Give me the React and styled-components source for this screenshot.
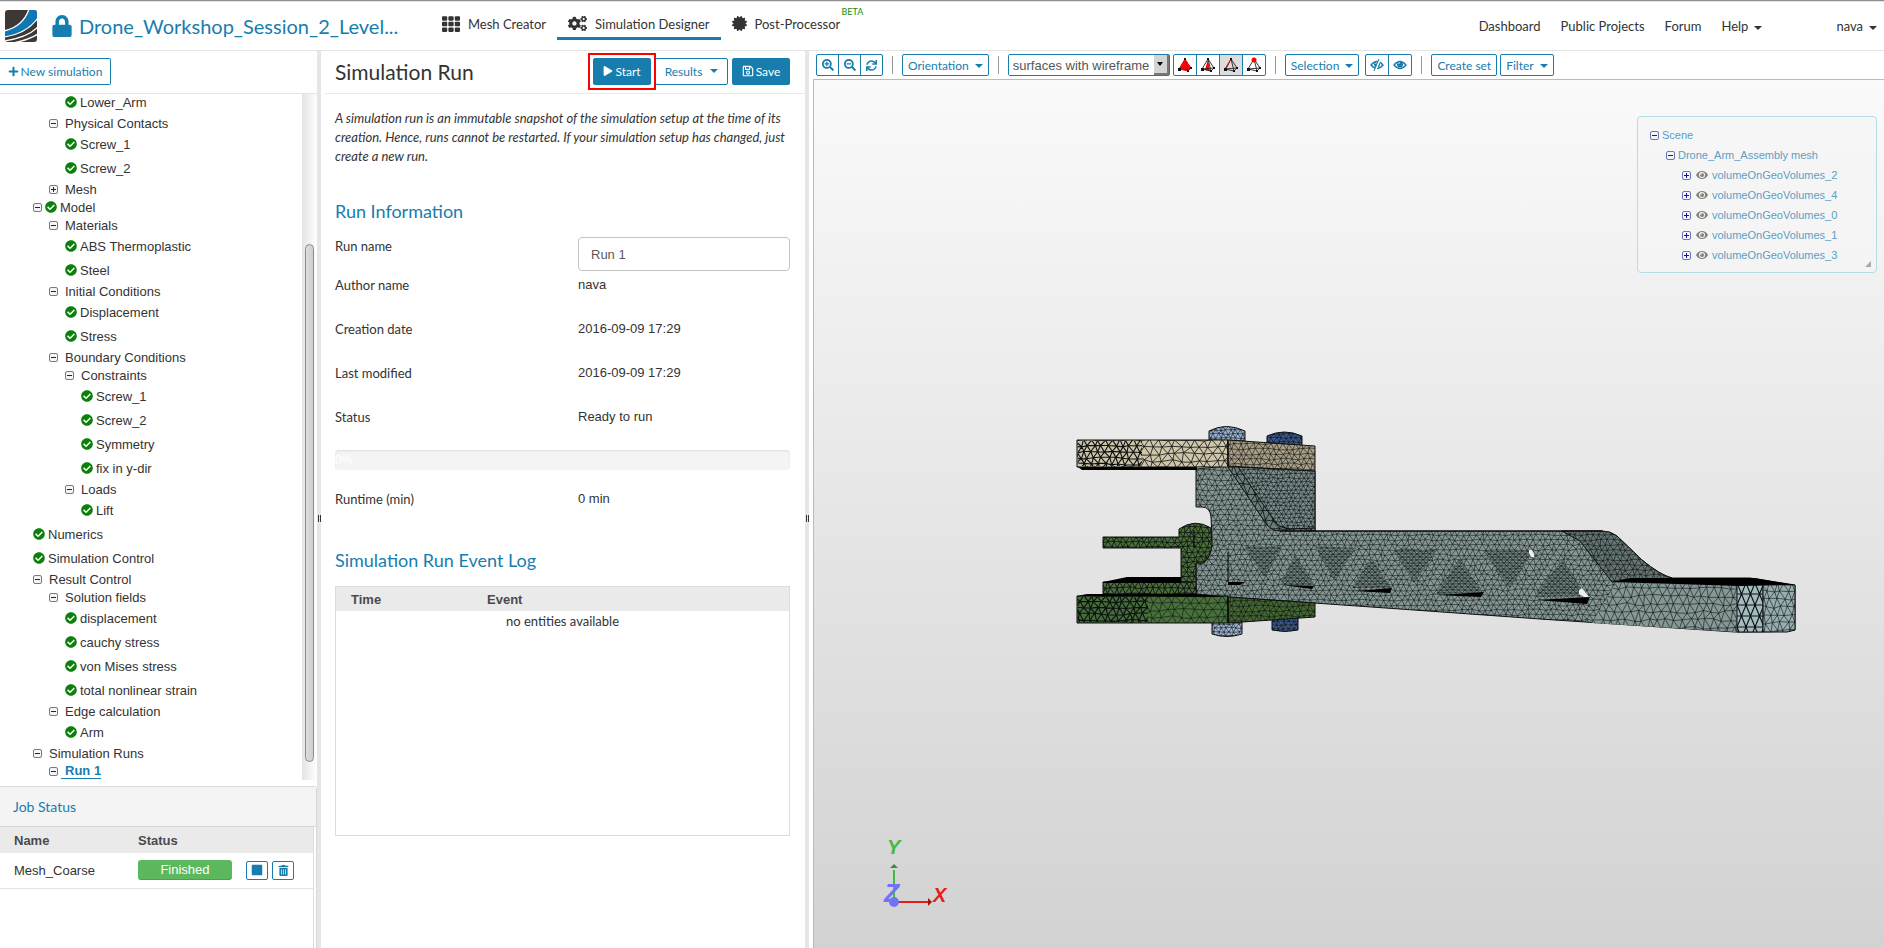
import React from 'react';
import styled, { createGlobalStyle, css } from 'styled-components';
import {
  FaLock, FaTh, FaCogs, FaCertificate, FaCheckCircle, FaPlus, FaPlay, FaRegSave,
  FaSearchPlus, FaSearchMinus, FaSync, FaTrashAlt, FaEye, FaStop,
} from 'react-icons/fa';

const BLUE = '#177dae';
const SANS = '"Liberation Sans", Arial, sans-serif';

const TREE = [
  { level: 2, label: 'Lower_Arm', leaf: true },
  { level: 1, label: 'Physical Contacts' },
  { level: 2, label: 'Screw_1', leaf: true },
  { level: 2, label: 'Screw_2', leaf: true },
  { level: 1, label: 'Mesh', closed: true },
  { level: 0, label: 'Model', checked: true },
  { level: 1, label: 'Materials' },
  { level: 2, label: 'ABS Thermoplastic', leaf: true },
  { level: 2, label: 'Steel', leaf: true },
  { level: 1, label: 'Initial Conditions' },
  { level: 2, label: 'Displacement', leaf: true },
  { level: 2, label: 'Stress', leaf: true },
  { level: 1, label: 'Boundary Conditions' },
  { level: 2, label: 'Constraints' },
  { level: 3, label: 'Screw_1', leaf: true },
  { level: 3, label: 'Screw_2', leaf: true },
  { level: 3, label: 'Symmetry', leaf: true },
  { level: 3, label: 'fix in y-dir', leaf: true },
  { level: 2, label: 'Loads' },
  { level: 3, label: 'Lift', leaf: true },
  { level: 0, label: 'Numerics', leaf: true },
  { level: 0, label: 'Simulation Control', leaf: true },
  { level: 0, label: 'Result Control' },
  { level: 1, label: 'Solution fields' },
  { level: 2, label: 'displacement', leaf: true },
  { level: 2, label: 'cauchy stress', leaf: true },
  { level: 2, label: 'von Mises stress', leaf: true },
  { level: 2, label: 'total nonlinear strain', leaf: true },
  { level: 1, label: 'Edge calculation' },
  { level: 2, label: 'Arm', leaf: true },
  { level: 0, label: 'Simulation Runs' },
  { level: 1, label: 'Run 1', active: true },
];

const VOLUMES = [2, 4, 0, 1, 3];

// triangle mesh lines over a box, with the nodes shifted a little
function meshPath(x0, y0, x1, y1, sx, sy, jitter = 0.2, seed = 7) {
  let s = seed;
  const rnd = () => {
    s = (s * 16807) % 2147483647;
    return s / 2147483647 - 0.5;
  };
  const rows = Math.ceil((y1 - y0) / sy) + 1;
  const cols = Math.ceil((x1 - x0) / sx) + 2;
  const nodes = [];
  for (let r = 0; r <= rows; r++) {
    const row = [];
    for (let c = 0; c <= cols; c++) {
      row.push([
        x0 + (c - (r % 2 ? 0.5 : 0)) * sx + rnd() * sx * jitter * 2,
        y0 + r * sy + rnd() * sy * jitter * 2,
      ]);
    }
    nodes.push(row);
  }
  const pt = ([x, y]) => `${x.toFixed(1)} ${y.toFixed(1)}`;
  let d = '';
  nodes.forEach((row, r) => {
    d += `M${row.map(pt).join('L')}`;
    if (r === rows) return;
    const next = nodes[r + 1];
    row.forEach((p, c) => {
      d += `M${pt(p)}L${pt(next[c])}`;
      const other = r % 2 ? next[c - 1] : next[c + 1];
      if (other) d += `M${pt(p)}L${pt(other)}`;
    });
  });
  return d;
}

const GREY = '#869896';
const BODY = 'M1196 469L1228 466L1315 471V531H1602Q1610 531 1617 536L1642 560Q1660 575 1672 578H1750L1795 585V630Q1790 632 1735 632L1540 619L1400 609L1228 597L1196 594V563H1204Q1212 556 1212 540L1211 517Q1210 507 1202 507H1196Z';

const PARTS = [
  { id: 'boltA', d: 'M1209 440V431Q1226 422 1245 431V441Z', fill: '#9db4d3', box: [1208, 426, 1246, 442, 5, 4] },
  { id: 'boltB', d: 'M1267 445V436Q1284 428 1302 436V446Z', fill: '#3f5c90', box: [1266, 430, 1303, 447, 5, 4] },
  { id: 'boltC', d: 'M1212 622H1242V634Q1227 639 1212 634Z', fill: '#a5b9d6', box: [1211, 620, 1243, 638, 5, 4] },
  { id: 'boltD', d: 'M1272 618H1298V630Q1285 633 1272 630Z', fill: '#3f5c90', box: [1271, 617, 1299, 633, 5, 4] },
  { id: 'armBody', d: BODY, fill: GREY, box: [1194, 465, 1640, 634, 6, 5], sw: 0.55 },
  { id: 'armEnd', d: 'M1616 583L1738 585V632L1592 623Z', fill: GREY, box: [1590, 580, 1740, 634, 8, 8], line: 'none' },
  { id: 'tail', d: 'M1737 584H1763V632H1737Z', fill: '#a4bbc0', box: [1737, 583, 1765, 634, 9, 11], sw: 1.1, jitter: 0 },
  { id: 'tailEnd', d: 'M1763 584L1795 585V630L1787 632H1763Z', fill: '#97acaf', box: [1763, 583, 1797, 634, 7, 8] },
  { id: 'slope', d: 'M1562 531H1602Q1610 531 1617 536L1642 560Q1660 575 1672 578L1612 582L1580 541Z', fill: '#667675', box: [1560, 530, 1674, 584, 6, 5], sw: 0.6 },
  { id: 'plate', d: 'M1238 467L1315 471V529H1290L1275 525Z', fill: '#7d908f', box: [1236, 466, 1317, 532, 5, 4], sw: 0.6 },
  { id: 'rib', d: 'M1228 467H1238L1275 522Q1280 528 1290 529L1315 528V531H1280Q1272 531 1267 525Z', fill: '#6b7b7b', box: [1226, 466, 1317, 532, 8, 9], sw: 0.8 },
  { id: 'beamFront', d: 'M1077 440H1228V467H1077Z', fill: '#cfc6aa', box: [1077, 440, 1230, 468, 9, 7], sw: 0.8 },
  { id: 'beamDense', d: 'M1078 441H1142V466H1078Z', fill: '#cbc2a7', box: [1077, 440, 1143, 468, 7, 6], sw: 1.1, line: 'none' },
  { id: 'beamSide', d: 'M1228 440L1315 446V471L1228 466Z', fill: '#aa9f86', box: [1226, 439, 1317, 473, 6, 5], sw: 0.6 },
  { id: 'nut', d: 'M1179 529Q1195 518 1211 528L1212 545Q1210 560 1202 563H1196V594H1181V548H1103V537H1179Z', fill: '#4b6f3b', box: [1102, 522, 1213, 596, 6, 5], sw: 0.8 },
  { id: 'shelf', d: 'M1103 582H1196V594H1103Z', fill: '#4b6f3b', box: [1102, 582, 1198, 595, 6, 6], sw: 0.9 },
  { id: 'baseFront', d: 'M1077 596H1228V623H1077Z', fill: '#48703a', box: [1077, 596, 1230, 624, 9, 7], sw: 0.6 },
  { id: 'baseDense', d: 'M1078 597H1148V622H1078Z', fill: '#456c39', box: [1077, 596, 1149, 624, 7, 6], sw: 1.1, line: 'none' },
  { id: 'baseSide', d: 'M1228 597L1315 603V617L1228 623Z', fill: '#456733', box: [1226, 596, 1317, 625, 6, 5], sw: 0.6 },
];

const POCKETS = [
  'M1245 547L1282 546L1264 577Z', 'M1295 555L1280 585L1314 586Z',
  'M1315 546L1356 548L1334 580Z', 'M1371 557L1352 588L1391 588Z',
  'M1393 550L1437 550L1414 583Z', 'M1459 559L1436 594L1483 592Z',
  'M1483 551L1534 550L1510 588Z', 'M1562 560L1534 597L1586 596Z',
].join('');

const SHADOWS = [
  'M1078 467H1197V470H1082Z', 'M1103 582L1127 577H1181V583H1103Z',
  'M1077 596L1087 594H1197L1228 597Z', 'M1612 582L1630 578H1755L1795 585L1740 586Z',
  'M1228 582H1245L1240 585H1228Z', 'M1282 585L1314 586L1312 589Z',
  'M1354 591L1392 588L1390 593Z', 'M1438 595L1484 592L1481 597Z',
  'M1537 600L1590 597L1587 604Z',
].join('');

function MeshPart({ part }) {
  const [x0, y0, x1, y1, sx, sy] = part.box;
  return (
    <g>
      <clipPath id={part.id}><path d={part.d} /></clipPath>
      <path d={part.d} fill={part.fill} stroke={part.line || '#111'} strokeWidth="1" />
      <path
        d={meshPath(x0, y0, x1, y1, sx, sy, part.jitter)}
        clipPath={`url(#${part.id})`}
        fill="none"
        stroke="#0b1010"
        strokeWidth={part.sw || 0.6}
      />
    </g>
  );
}

function DroneArm() {
  return (
    <Drawing viewBox="814 80 1070 868" role="img" aria-label="Drone arm mesh">
      {PARTS.map((part) => <MeshPart key={part.id} part={part} />)}
      <clipPath id="pockets"><path d={POCKETS} /></clipPath>
      <path d={POCKETS} fill="#758685" />
      <path d={meshPath(1240, 545, 1590, 600, 6, 3, 0.1)} clipPath="url(#pockets)" fill="none" stroke="#0b1010" strokeWidth="0.6" />
      <path d={SHADOWS} fill="#000" />
      <path d="M1228 440V466M1228 552V582M1228 597V623M1194 530V548M1280 531H1602" fill="none" stroke="#000" strokeWidth="1" />
      <path d="M1529 550l3 0 2 4 0 3-3 0-2-4ZM1579 590l3-2 3 4 4 5-5 0-5-3Z" fill="#eee" />
      <path d="M894 898V870" stroke="#44b944" strokeWidth="2" />
      <path d="M890 868L894 864L898 868Z" fill="#3b8c45" />
      <path d="M894 902H930" stroke="#e81c1c" strokeWidth="2" />
      <path d="M928 898L932 902L928 906Z" fill="#a01414" />
      <circle cx="894" cy="902" r="5" fill="#7272f5" />
      <AxisText x="887" y="854" $color="#44b944">Y</AxisText>
      <AxisText x="884" y="902" $color="#7272f5" $big>Z</AxisText>
      <AxisText x="933" y="902" $color="#e81c1c">X</AxisText>
    </Drawing>
  );
}

function Logo() {
  return (
    <svg width="32" height="32" viewBox="0 0 32 32" aria-hidden="true">
      <clipPath id="logo"><rect width="32" height="32" rx="3" /></clipPath>
      <g clipPath="url(#logo)">
        <rect width="32" height="32" fill="#3e3835" />
        <path d="M24 0H33V8C25 19 14 25 -1 27V21C12 18 20 11 24 0Z" fill="#0f78b4" />
        <path d="M24 -1C20 11 12 18 -1 21M33 8C25 19 14 25 -1 27M33 17C26 24 14 29 -1 31M33 24C27 28 18 31 8 33" fill="none" stroke="#fff" strokeWidth="1.3" />
      </g>
    </svg>
  );
}

// tetrahedron glyphs of the pick mode buttons
function PickIcon({ mode }) {
  return (
    <svg width="16" height="16" viewBox="0 0 16 16" aria-hidden="true">
      {mode === 'volume' && <path d="M8 2L2 12L11 14L14 11Z" fill="#f00" />}
      {mode === 'face' && <path d="M8 2L5 13L10 14Z" fill="#f00" />}
      <path d="M8 2L2 12L11 14L14 11ZM8 2L11 14M2 12L14 11" fill="none" stroke={mode === 'volume' ? '#d00' : '#222'} strokeWidth="0.9" />
      {mode === 'edge' && <path d="M8 2L3 12" stroke="#f00" strokeWidth="1" />}
      <path d="M1 11h3v3h-3ZM10 13h2v2h-2ZM13 10h2v2h-2ZM7 1h2v2h-2Z" fill="#111" />
      {mode === 'node' && <circle cx="8" cy="3" r="2.5" fill="#f00" />}
    </svg>
  );
}

function Eye({ off }) {
  return (
    <svg width="14" height="12" viewBox="0 0 14 12" aria-hidden="true">
      <path d="M1 6Q7 -1 13 6Q7 13 1 6Z" fill="none" stroke={BLUE} strokeWidth="1.3" />
      <circle cx="7" cy="5.5" r="3" fill={BLUE} />
      <path d="M5.5 5Q5.6 3.8 7 3.6" fill="none" stroke="#fff" strokeWidth="0.8" />
      {off && <path d="M10 0L5 12" stroke="#fff" strokeWidth="2" />}
      {off && <path d="M9 0L4 12" stroke={BLUE} strokeWidth="1" />}
    </svg>
  );
}

function TreeRow({ item }) {
  return (
    <Row $leaf={item.leaf} $level={item.level}>
      {!item.leaf && <Toggle $closed={item.closed} aria-label={`Toggle ${item.label}`} />}
      {(item.leaf || item.checked) && <FaCheckCircle />}
      <TreeLink href="#" $tight={item.leaf || item.checked} $active={item.active}>{item.label}</TreeLink>
    </Row>
  );
}

export default function App() {
  return (
    <Page>
      <GlobalStyle />
      <Header>
        <Logo />
        <Project href="#">
          <FaLock />
          <span>Drone_Workshop_Session_2_Level...</span>
        </Project>
        <Tabs>
          <Tab href="#"><FaTh size={18} />Mesh Creator</Tab>
          <Tab href="#" $active><FaCogs size={19} />Simulation Designer</Tab>
          <Tab href="#"><FaCertificate size={15} />Post-Processor<Beta>BETA</Beta></Tab>
        </Tabs>
        <Links>
          <a href="#">Dashboard</a>
          <a href="#">Public Projects</a>
          <a href="#">Forum</a>
          <a href="#">Help<Caret /></a>
          <User href="#">nava<Caret /></User>
        </Links>
      </Header>

      <Main>
        <Sidebar>
          <SidebarTop>
            <NewButton><FaPlus size={11} />New simulation</NewButton>
          </SidebarTop>
          <TreeArea>
            <Tree>
              {TREE.map((item, i) => <TreeRow key={i} item={item} />)}
            </Tree>
            <Scrollbar><Thumb /></Scrollbar>
          </TreeArea>
          <Jobs>
            <JobsTitle>Job Status</JobsTitle>
            <JobsBody>
              <JobTable>
                <thead>
                  <tr><th>Name</th><th>Status</th><th aria-label="Actions" /></tr>
                </thead>
                <tbody>
                  <tr>
                    <td>Mesh_Coarse</td>
                    <td><Badge>Finished</Badge></td>
                    <td>
                      <JobActions>
                        <JobButton aria-label="Stop"><FaStop size={12} /></JobButton>
                        <JobButton aria-label="Delete"><FaTrashAlt size={11} /></JobButton>
                      </JobActions>
                    </td>
                  </tr>
                </tbody>
              </JobTable>
            </JobsBody>
          </Jobs>
        </Sidebar>

        <Splitter><i /></Splitter>

        <RunPanel>
          <RunHeader>
            <h1>Simulation Run</h1>
            <Button $primary $marked><FaPlay size={10} />Start</Button>
            <Button $wide>Results<Caret /></Button>
            <Button $primary><FaRegSave size={12} />Save</Button>
          </RunHeader>
          <RunBody>
            <Intro>
              A simulation run is an immutable snapshot of the simulation setup at the time of its
              creation. Hence, runs cannot be restarted. If your simulation setup has changed, just
              create a new run.
            </Intro>
            <SectionTitle>Run Information</SectionTitle>
            <NameField>
              <label htmlFor="run-name">Run name</label>
              <input id="run-name" defaultValue="Run 1" />
            </NameField>
            <Facts>
              <dt>Author name</dt><dd>nava</dd>
              <dt>Creation date</dt><dd>2016-09-09 17:29</dd>
              <dt>Last modified</dt><dd>2016-09-09 17:29</dd>
              <dt>Status</dt><dd>Ready to run</dd>
            </Facts>
            <Progress>0%</Progress>
            <Facts>
              <dt>Runtime (min)</dt><dd>0 min</dd>
            </Facts>
            <SectionTitle $tight>Simulation Run Event Log</SectionTitle>
            <LogBox>
              <LogTable>
                <thead><tr><th>Time</th><th>Event</th></tr></thead>
                <tbody><tr><td colSpan={2}>no entities available</td></tr></tbody>
              </LogTable>
            </LogBox>
          </RunBody>
        </RunPanel>

        <Splitter><i /></Splitter>

        <Viewer>
          <Toolbar>
            <Group>
              <Tool $narrow aria-label="Zoom in"><FaSearchPlus size={12} /></Tool>
              <Tool $narrow aria-label="Zoom out"><FaSearchMinus size={12} /></Tool>
              <Tool $narrow aria-label="Refresh"><FaSync size={11} /></Tool>
            </Group>
            <Divider />
            <TextTool>Orientation<Caret /></TextTool>
            <Divider />
            <ToolSet>
              <SelectBox>
                <select aria-label="Render mode" defaultValue="wire">
                  <option value="wire">surfaces with wireframe</option>
                </select>
                <SelectArrow />
              </SelectBox>
              <Group>
                <Tool aria-label="Pick volumes"><PickIcon mode="volume" /></Tool>
                <Tool aria-label="Pick faces"><PickIcon mode="face" /></Tool>
                <Tool aria-label="Pick edges" $pressed><PickIcon mode="edge" /></Tool>
                <Tool aria-label="Pick nodes"><PickIcon mode="node" /></Tool>
              </Group>
            </ToolSet>
            <Divider />
            <ToolSet $loose>
              <TextTool>Selection<Caret /></TextTool>
              <Group>
                <Tool aria-label="Hide selection"><Eye off /></Tool>
                <Tool aria-label="Show all"><Eye /></Tool>
              </Group>
            </ToolSet>
            <Divider />
            <ToolSet>
              <TextTool>Create set</TextTool>
              <TextTool>Filter<Caret /></TextTool>
            </ToolSet>
          </Toolbar>
          <Canvas>
            <DroneArm />
            <ScenePanel>
              <SceneRow $level={0}><Toggle aria-label="Toggle scene" /><a href="#">Scene</a></SceneRow>
              <SceneRow $level={1}><Toggle aria-label="Toggle mesh" /><a href="#">Drone_Arm_Assembly mesh</a></SceneRow>
              {VOLUMES.map((n) => (
                <SceneRow key={n} $level={2}>
                  <Toggle $closed aria-label={`Expand volume ${n}`} />
                  <FaEye size={12} />
                  <a href="#">volumeOnGeoVolumes_{n}</a>
                </SceneRow>
              ))}
              <Grip />
            </ScenePanel>
          </Canvas>
        </Viewer>
      </Main>
    </Page>
  );
}

const GlobalStyle = createGlobalStyle`
  * { box-sizing: border-box; }
  body {
    margin: 0;
    background: #fff;
    color: #333;
    font-family: Lato, sans-serif;
    font-size: 13px;
  }
  a { color: inherit; text-decoration: none; }
  button { font-family: inherit; cursor: pointer; }
  h1, h2, p, dl, dd, ul { margin: 0; padding: 0; font-weight: normal; }
`

const Page = styled.div`
  display: flex;
  flex-direction: column;
  height: 100vh;
  border-top: 1px solid #8f8f8f;
`

const Header = styled.header`
  display: flex;
  align-items: center;
  flex: none;
  height: 49px;
  padding: 0 7px 0 5px;
  border-top: 1px solid #e4e4e4;
`

const Project = styled.a`
  display: flex;
  align-items: center;
  width: 394px;
  padding-left: 15px;
  color: ${BLUE};
  font-size: 20px;
  white-space: nowrap;

  svg {
    width: 20px;
    height: 22px;
    margin-right: 7px;
  }
`

const Tabs = styled.nav`
  display: flex;
  align-self: flex-start;
  height: 38px;
`

const Tab = styled.a`
  display: flex;
  align-items: center;
  gap: 8px;
  padding: 8px 11px 0;
  border-bottom: 3px solid ${(p) => (p.$active ? BLUE : 'transparent')};
  white-space: nowrap;
  position: relative;
`

const Beta = styled.span`
  position: absolute;
  top: 4px;
  left: 121px;
  color: #109010;
  font-size: 9px;
`

const Links = styled.nav`
  display: flex;
  flex: 1;
  justify-content: flex-end;
  gap: 20px;
`

const User = styled.a`
  margin-left: 54px;
`

const Caret = styled.span`
  display: inline-block;
  margin-left: 6px;
  vertical-align: middle;
  border: 4px solid transparent;
  border-top-color: currentColor;
  border-bottom: 0;
`

const Main = styled.main`
  display: grid;
  grid-template-columns: 317px 4px 484px 4px minmax(0, 1fr);
  flex: 1;
  min-height: 0;
  border-top: 1px solid #e4e4e4;
`

const Splitter = styled.div`
  display: flex;
  align-items: center;
  justify-content: center;
  background: #e6e6e6;

  i {
    width: 3px;
    height: 7px;
    margin-bottom: -38px;
    border: solid #333;
    border-width: 0 1px;
  }
`

const Sidebar = styled.aside`
  display: flex;
  flex-direction: column;
  min-height: 0;
`

const SidebarTop = styled.div`
  flex: none;
  height: 43px;
  padding-top: 7px;
  border-bottom: 1px solid #e4e4e4;
`

const Button = styled.button`
  display: flex;
  align-items: center;
  justify-content: center;
  gap: 2px;
  width: ${(p) => (p.$wide ? 73 : 58)}px;
  height: 27px;
  padding: 0;
  border: 1px solid ${BLUE};
  border-radius: 2px;
  background: ${(p) => (p.$primary ? BLUE : '#fff')};
  color: ${(p) => (p.$primary ? '#fff' : BLUE)};
  font-size: 12px;

  ${(p) => p.$marked && css`
    position: relative;

    &::after {
      content: '';
      position: absolute;
      inset: -6px;
      z-index: 1;
      border: 2px solid #f00;
    }
  `}
`

const NewButton = styled(Button)`
  width: 111px;
  border-left: 0;
  border-radius: 0 2px 2px 0;
`

const TreeArea = styled.div`
  display: flex;
  flex: 1;
  min-height: 0;
  padding-bottom: 6px;
`

const Tree = styled.ul`
  display: flex;
  flex: 1;
  flex-direction: column;
  justify-content: flex-end;
  overflow: hidden;
  font-family: ${SANS};
  list-style: none;
`

const Row = styled.li`
  display: flex;
  flex: none;
  align-items: center;
  height: ${(p) => (p.$leaf ? 24 : 18)}px;
  padding-left: ${(p) => 33 + p.$level * 16}px;

  svg {
    width: 12px;
    height: 12px;
    margin-right: 3px;
    color: #0a820a;
  }
`

const Toggle = styled.button`
  flex: none;
  width: 9px;
  height: 9px;
  margin-right: 3px;
  padding: 0;
  border: 1px solid #6878b4;
  border-radius: 2px;
  background:
    linear-gradient(#1414b4, #1414b4) center / 5px 1px no-repeat,
    ${(p) => p.$closed && 'linear-gradient(#1414b4, #1414b4) center / 1px 5px no-repeat,'}
    #f4f4f4;
`

const TreeLink = styled.a`
  padding-left: ${(p) => (p.$tight ? 0 : 4)}px;
  white-space: nowrap;

  ${(p) => p.$active && css`
    border-bottom: 1px solid ${BLUE};
    color: ${BLUE};
    font-weight: bold;
  `}
`

const Scrollbar = styled.div`
  width: 15px;
  padding: 150px 3px 18px;
  background: linear-gradient(to right, #e4e4e4, #fff);
`

const Thumb = styled.div`
  height: 100%;
  border: 1px solid #8c8c8c;
  border-radius: 5px;
  background: linear-gradient(to right, #ddd, #cfcfcf);
`

const Jobs = styled.section`
  flex: none;
  height: 162px;
  border-top: 1px solid #d8d8d8;
  border-right: 1px solid #d8d8d8;
  border-top-right-radius: 3px;
`

const JobsTitle = styled.h2`
  height: 40px;
  padding-left: 13px;
  border-bottom: 1px solid #d8d8d8;
  background: #f4f4f4;
  color: ${BLUE};
  font-size: 14px;
  line-height: 40px;
`

const JobsBody = styled.div`
  height: 121px;
  margin-right: 2px;
  border-right: 1px solid #ddd;
`

const JobTable = styled.table`
  width: 100%;
  border-collapse: collapse;
  table-layout: fixed;
  font-family: ${SANS};

  th, td {
    padding: 0 0 0 14px;
    text-align: left;
  }
  th { height: 26px; background: #eaeaea; color: #4a4a4a; }
  td { height: 35px; border-bottom: 1px solid #e4e4e4; }
  th:nth-child(1) { width: 138px; }
  th:nth-child(2) { width: 94px; }
  th:nth-child(2), td:nth-child(2) { padding: 0; }
`

const Badge = styled.span`
  display: block;
  height: 20px;
  border-radius: 3px;
  border-bottom: 1px solid #4e9f4e;
  background: #5cb85c;
  color: #fff;
  line-height: 19px;
  text-align: center;
`

const JobActions = styled.div`
  display: flex;
  gap: 4px;
`

const JobButton = styled.button`
  display: flex;
  align-items: center;
  justify-content: center;
  width: 22px;
  height: 19px;
  padding: 0;
  border: 1px solid ${BLUE};
  border-radius: 2px;
  background: #fff;
  color: ${BLUE};
`

const RunPanel = styled.section`
  min-height: 0;
  overflow: hidden;
`

const RunHeader = styled.div`
  display: flex;
  align-items: center;
  gap: 4px;
  height: 43px;
  margin-left: 4px;
  padding: 0 15px 2px 10px;
  border-bottom: 1px solid #eaeaea;

  h1 {
    flex: 1;
    font-size: 21px;
  }
`

const RunBody = styled.div`
  padding: 15px 15px 0 14px;
`

const Intro = styled.p`
  font-style: italic;
  line-height: 19px;
`

const SectionTitle = styled.h2`
  padding: ${(p) => (p.$tight ? 16 : 33)}px 0 14px;
  color: ${BLUE};
  font-size: 18px;
  line-height: 24px;
`

const NameField = styled.div`
  display: grid;
  grid-template-columns: 243px 1fr;
  height: 34px;
  line-height: 18px;

  input {
    width: 100%;
    min-width: 0;
    height: 34px;
    padding: 0 12px;
    border: 1px solid #c4c4c4;
    border-radius: 4px;
    color: #5a5a5a;
    font-family: ${SANS};
    font-size: 13px;
  }
`

const Facts = styled.dl`
  display: grid;
  grid-template-columns: 243px 1fr;
  row-gap: 26px;
  padding: 5px 0 24px;
  line-height: 18px;

  dd {
    font-family: ${SANS};
  }
`

const Progress = styled.div`
  height: 20px;
  margin-bottom: 15px;
  border-radius: 4px;
  background: #f4f4f4;
  box-shadow: inset 0 1px 2px #ddd;
  color: #fff;
  font-family: ${SANS};
  font-size: 12px;
  line-height: 20px;
`

const LogBox = styled.div`
  height: 250px;
  border: 1px solid #dcdcdc;
`

const LogTable = styled.table`
  width: 100%;
  border-collapse: collapse;

  th {
    height: 24px;
    padding: 0 15px;
    background: #eaeaea;
    color: #4a4a4a;
    font-family: ${SANS};
    text-align: left;
  }
  th:first-child { width: 136px; }
  td { padding: 2px 0; text-align: center; }
`

const Viewer = styled.section`
  display: flex;
  flex-direction: column;
  min-width: 0;
  padding-left: 4px;
`

const Toolbar = styled.div`
  display: flex;
  align-items: center;
  gap: 9px;
  flex: none;
  height: 28px;
  padding: 0 3px;
`

const Group = styled.div`
  display: flex;
`

const ToolSet = styled.div`
  display: flex;
  align-items: center;
  gap: ${(p) => (p.$loose ? 6 : 3)}px;
`

const Divider = styled.span`
  width: 1px;
  height: 18px;
  background: #999;
`

const Tool = styled.button`
  display: flex;
  align-items: center;
  justify-content: center;
  width: ${(p) => (p.$narrow ? 23 : 24)}px;
  height: 22px;
  padding: 0;
  border: 1px solid ${BLUE};
  background: ${(p) => (p.$pressed ? '#ddd' : '#fff')};
  color: ${BLUE};

  & + & { margin-left: -1px; }
  &:first-child { border-radius: 2px 0 0 2px; }
  &:last-child { border-radius: 0 2px 2px 0; }
`

const TextTool = styled.button`
  height: 22px;
  padding: 0 5px;
  border: 1px solid ${BLUE};
  border-radius: 2px;
  background: #fff;
  color: ${BLUE};
  font-size: 12px;
  white-space: nowrap;
`

const SelectBox = styled.div`
  display: flex;
  position: relative;
  width: 162px;
  height: 22px;
  border: 1px solid ${BLUE};
  border-radius: 2px;

  select {
    flex: 1;
    padding: 0 4px;
    border: 0;
    background: #fff;
    color: #555;
    appearance: none;
    font-family: ${SANS};
    font-size: 13px;
  }
`

const SelectArrow = styled.span`
  display: flex;
  align-items: center;
  justify-content: center;
  position: absolute;
  top: 0;
  right: 0;
  width: 15px;
  height: 20px;
  border: solid #777;
  border-width: 0 2px 2px 0;
  background: #d4d4d4;
  pointer-events: none;

  &::after {
    content: '';
    border: 3px solid transparent;
    border-top: 4px solid #000;
    border-bottom: 0;
  }
`

const Canvas = styled.div`
  flex: 1;
  min-height: 0;
  position: relative;
  border-top: 1px solid #bbb;
  border-left: 1px solid #bbb;
  background: linear-gradient(#fafafa, #d2d2d2);
`

const Drawing = styled.svg`
  display: block;
  width: 100%;
  height: 100%;
`

const AxisText = styled.text`
  fill: ${(p) => p.$color};
  font-family: ${SANS};
  font-size: ${(p) => (p.$big ? 25 : 20)}px;
  font-style: italic;
  font-weight: bold;
`

const ScenePanel = styled.div`
  position: absolute;
  top: 36px;
  right: 7px;
  width: 240px;
  height: 157px;
  padding: 8px 12px;
  border: 1px solid #b4dde8;
  border-radius: 4px;
  background: rgba(245, 245, 245, 0.7);
  color: #5a9fc4;
  font-family: ${SANS};
  font-size: 11px;
`

const SceneRow = styled.div`
  display: flex;
  align-items: center;
  height: 20px;
  padding-left: ${(p) => p.$level * 16}px;

  svg {
    margin: 0 4px 0 2px;
    color: #85857d;
  }
`

const Grip = styled.i`
  position: absolute;
  right: 5px;
  bottom: 5px;
  border: 3px solid #aaa;
  border-top-color: transparent;
  border-left-color: transparent;
`
